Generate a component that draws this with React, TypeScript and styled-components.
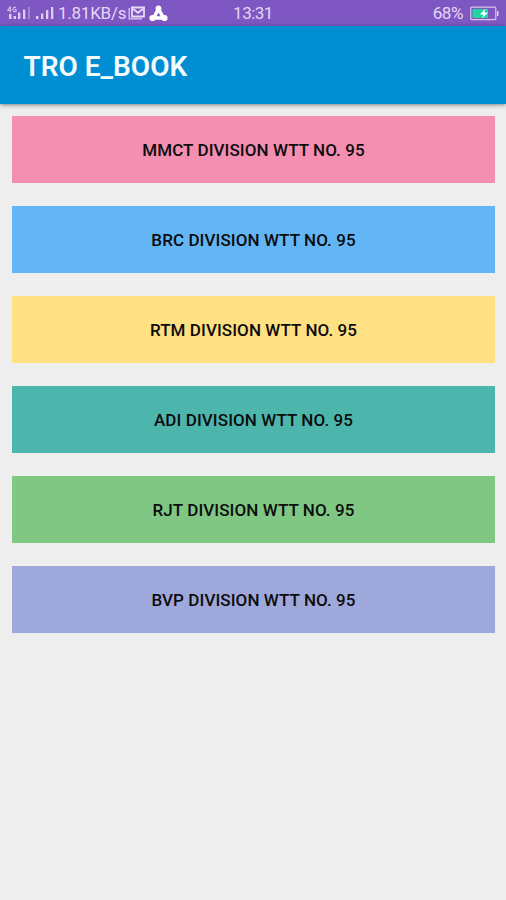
import React from "react";
import styled, { createGlobalStyle } from "styled-components";

const GlobalStyle = createGlobalStyle`
  * { box-sizing: border-box; }
  body { margin: 0; background: #eeeeee; font-family: Roboto, "Liberation Sans", sans-serif; }
`;

const Screen = styled.div`
  display: flex;
  flex-direction: column;
  height: 900px;
  background: #eeeeee;
`;

const StatusBar = styled.header`
  display: grid;
  grid-template-columns: 1fr auto 1fr;
  align-items: center;
  height: 26px;
  padding: 0 7px;
  background: #7e57c2;
  color: #e6d6f5;
  font-size: 17px;
  line-height: 26px;
`;

const StatusGroup = styled.div<{ $end?: boolean }>`
  display: flex;
  align-items: center;
  justify-content: ${(p) => (p.$end ? "flex-end" : "flex-start")};
  white-space: nowrap;

  svg { display: block; flex: none; }
`;

const Speed = styled.span`
  width: 70px;
  margin-left: 4px;
  letter-spacing: -0.25px;
`;

const Notifications = styled.span`
  display: flex;
  align-items: center;
  gap: 4px;
`;

const Clock = styled.span`
  letter-spacing: -0.5px;
`;

const Percent = styled.span`
  margin-right: 7px;
  letter-spacing: -0.4px;
`;

const AppBar = styled.div`
  display: flex;
  align-items: center;
  height: 78px;
  padding: 4px 23.5px 0;
  background: #008ed2;
  box-shadow: 0 1px 4px rgba(0, 0, 0, 0.45);
`;

const Title = styled.h1`
  margin: 0;
  color: #f4fcff;
  font-size: 28px;
  font-weight: 600;
  line-height: 36px;
  white-space: nowrap;
`;

const DivisionList = styled.main`
  display: flex;
  flex-direction: column;
  gap: 23px;
  padding: 12px 11px 0 12px;
`;

const DivisionButton = styled.button<{ $color: string }>`
  height: 67px;
  padding: 1px 0 0;
  border: 0;
  background: ${(p) => p.$color};
  color: #0c0c0c;
  font-family: inherit;
  font-size: 17px;
  font-weight: 500;
  line-height: 24px;
  letter-spacing: 0.08px;
`;

const divisions = [
  { code: "MMCT", color: "#f48fb1" },
  { code: "BRC", color: "#64b5f6" },
  { code: "RTM", color: "#ffe082" },
  { code: "ADI", color: "#4db6ac" },
  { code: "RJT", color: "#81c784" },
  { code: "BVP", color: "#9fa8da" },
];

const SignalIcons = () => (
  <svg width="47" height="16" viewBox="0 0 47 16" fill="#dfcbf0">
    <path d="M3.2 1.500 .8 5.500h3.400M3.400 1.500v6M9 2.900C7.600 1.300 6 2.500 6 4.500s1.500 3 3 1.800V4.500H7.500" fill="none" stroke="#d5bdeb" strokeWidth="1.200" />
    <path d="M2 9h2.500v5H2zM6.500 11H9v3H6.500zM11 7.500h2.300V14H11zM16 4.500h2.300V14H16z" />
    <path d="M21 2h2v12h-2z" opacity=".4" />
    <path d="M29 11h2.300v3H29zM34 8.500h2.300V14H34zM39 5h2.300v9H39zM44 2h2.300v12H44z" />
  </svg>
);

const MailIcon = () => (
  <svg width="17" height="14" viewBox="0 0 17 14" fill="none" stroke="#e9daf5">
    <path d="M1.200 2v10.800H14" strokeWidth="1.500" opacity=".75" />
    <path d="M4 1.500h12v9H4z" strokeWidth="1.800" />
    <path d="m5 3 5 3.800L15 3" strokeWidth="2" />
  </svg>
);

const ShareIcon = () => (
  <svg width="19" height="17" viewBox="0 0 19 17">
    <path d="M9.500 4 4.500 13h10z" fill="none" stroke="#fff" strokeWidth="3.600" strokeLinejoin="round" />
    <g fill="#fff">
      <circle cx="9.500" cy="3.300" r="2.900" />
      <circle cx="3.500" cy="13" r="3.100" />
      <circle cx="15.500" cy="13" r="3.100" />
    </g>
  </svg>
);

const BatteryIcon = () => (
  <svg width="29" height="15" viewBox="0 0 29 15">
    <rect x=".8" y="1.200" width="25" height="12.500" rx="1" fill="none" stroke="#d9c6ed" strokeWidth="1.200" />
    <path d="M27 5h1.500v5H27z" fill="#e4d3f3" />
    <path d="M2.500 3H18v9H2.500z" fill="#20d5a0" />
    <path d="m15.500 2.500-5.500 6h3.500l-1.500 4 6-6h-3.700z" fill="#fff" />
  </svg>
);

export default function App() {
  return (
    <>
      <GlobalStyle />
      <Screen>
        <StatusBar>
          <StatusGroup>
            <SignalIcons />
            <Speed>1.81KB/s</Speed>
            <Notifications>
              <MailIcon />
              <ShareIcon />
            </Notifications>
          </StatusGroup>
          <Clock>13:31</Clock>
          <StatusGroup $end>
            <Percent>68%</Percent>
            <BatteryIcon />
          </StatusGroup>
        </StatusBar>
        <AppBar>
          <Title>TRO E_BOOK</Title>
        </AppBar>
        <DivisionList>
          {divisions.map((d) => (
            <DivisionButton key={d.code} $color={d.color}>
              {d.code} DIVISION WTT NO. 95
            </DivisionButton>
          ))}
        </DivisionList>
      </Screen>
    </>
  );
}
